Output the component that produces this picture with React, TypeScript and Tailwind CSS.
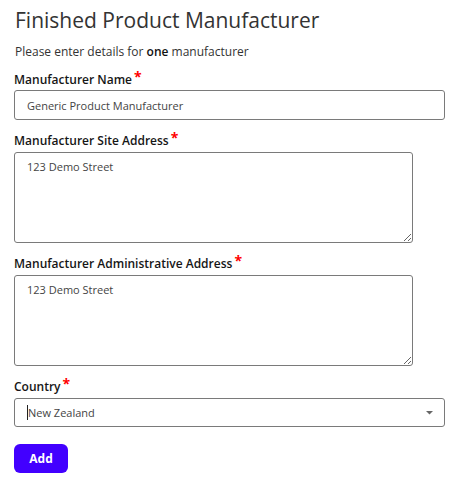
import React from "react";

function Label({ children }: { children: React.ReactNode }) {
  return (
    <div className="h-[16px] text-[12px] leading-[16px] font-semibold text-[#161616] flex items-start">
      <span>{children}</span>
      <span className="text-[#ff0000] text-[14px] leading-[10px] ml-[2px] font-bold">*</span>
    </div>
  );
}

export default function App() {
  return (
    <div className="bg-white w-[462px] h-[483px] px-[14px] pt-[6px] text-[#333]" style={{ fontFamily: '"Open Sans", "Noto Sans", sans-serif' }}>
      <h1 className="text-[21px] leading-[28px] font-normal text-[#333] pl-[1px]">Finished Product Manufacturer</h1>
      <p className="text-[12px] leading-[16px] mt-[10px] text-[#333] pl-[1px]">
        Please enter details for <span className="font-semibold text-[#111]">one</span> manufacturer
      </p>
      <div className="mt-[12px]">
        <Label>Manufacturer Name</Label>
        <div className="mt-[2px] h-[30px] w-[431px] border border-[#7a7a7a] rounded-[3px] flex items-center px-[12px] text-[11px] leading-[15px] text-[#444]">
          Generic Product Manufacturer
        </div>
      </div>
      <div className="mt-[13px]">
        <Label>Manufacturer Site Address</Label>
        <textarea
          readOnly
          defaultValue="123 Demo Street"
          className="block mt-[3px] h-[91px] w-[399px] border border-[#7a7a7a] rounded-[3px] px-[12px] pt-[6px] text-[11px] leading-[15px] text-[#444] outline-none resize-y"
        />
      </div>
      <div className="mt-[13px]">
        <Label>Manufacturer Administrative Address</Label>
        <textarea
          readOnly
          defaultValue="123 Demo Street"
          className="block mt-[3px] h-[91px] w-[399px] border border-[#7a7a7a] rounded-[3px] px-[12px] pt-[6px] text-[11px] leading-[15px] text-[#444] outline-none resize-y"
        />
      </div>
      <div className="mt-[13px]">
        <Label>Country</Label>
        <div className="mt-[3px] h-[29px] w-[431px] border border-[#7a7a7a] rounded-[3px] flex items-center pl-[12px] pr-[11px] text-[11px] leading-[15px] text-[#444]">
          <span className="w-[1px] h-[15px] bg-[#222]" />
          <span className="flex-1">New Zealand</span>
          <svg width="7" height="4" viewBox="0 0 7 4"><path d="M0 0 L7 0 L3.5 3.5 Z" fill="#666" /></svg>
        </div>
      </div>
      <button className="block mt-[17px] w-[54px] h-[29px] rounded-[6px] bg-[#4200ff] text-white text-[12px] font-bold">
        Add
      </button>
    </div>
  );
}
